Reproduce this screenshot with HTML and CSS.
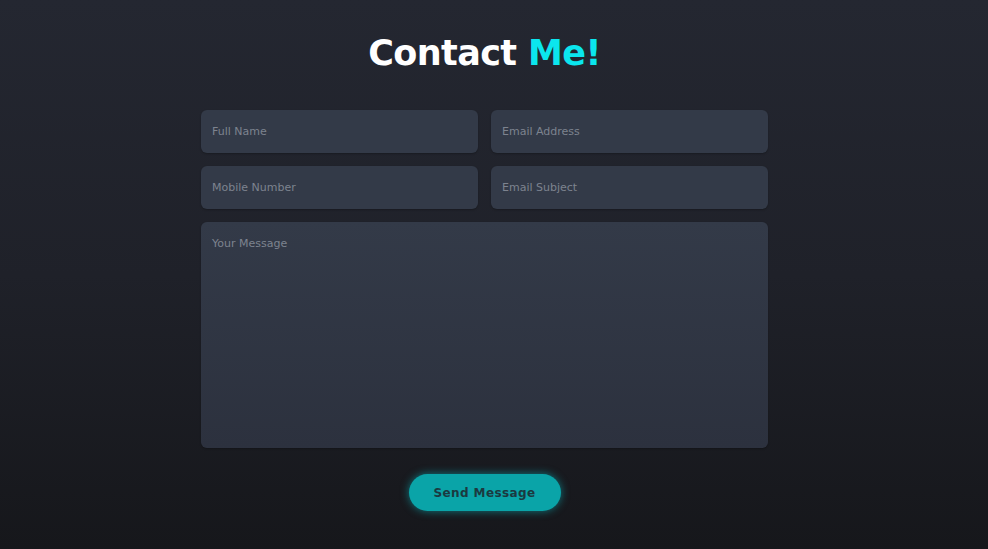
FILE: index.html
```html
<!DOCTYPE html>
<html>
<head>
<meta charset="utf-8">
<link rel="stylesheet" href="styles.css">
</head>
<body>
<section class="contact">
  <h2 class="heading">Contact <span class="accent">Me!</span></h2>
  <form class="form">
    <div class="row">
      <input class="field" type="text" placeholder="Full Name">
      <input class="field" type="email" placeholder="Email Address">
    </div>
    <div class="row">
      <input class="field" type="text" placeholder="Mobile Number">
      <input class="field" type="text" placeholder="Email Subject">
    </div>
    <textarea class="message" placeholder="Your Message"></textarea>
    <div class="actions">
      <button class="btn" type="button">Send Message</button>
    </div>
  </form>
</section>
</body>
</html>
```
FILE: styles.css
```css
html, body {
  margin: 0;
  height: 100%;
}
body {
  width: 988px;
  height: 549px;
  overflow: hidden;
  background: linear-gradient(180deg, #242731 0%, #1f2129 50%, #16171b 100%);
  font-family: "DejaVu Sans", "Open Sans", sans-serif;
}
.contact {
  width: 969px;
  display: flex;
  flex-direction: column;
  align-items: center;
  padding-top: 30px;
}
.heading {
  margin: 0;
  font-family: "DejaVu Sans", sans-serif;
  font-weight: 700;
  font-size: 35px;
  line-height: 46px;
  color: #ffffff;
  letter-spacing: -0.6px;
}
.accent {
  color: #0be6ee;
}
.form {
  width: 567px;
  margin-top: 34px;
  display: flex;
  flex-direction: column;
  gap: 13px;
}
.row {
  display: flex;
  gap: 13px;
}
.field, .message {
  box-sizing: border-box;
  border: none;
  outline: none;
  border-radius: 6px;
  background: #333a48;
  color: #c8ccd4;
  font-family: "DejaVu Sans", sans-serif;
  font-size: 11px;
  padding: 0 11px;
  box-shadow: 0 1px 2px rgba(0,0,0,0.25);
}
.field {
  flex: 1;
  width: 0;
  height: 43px;
}
.message {
  height: 226px;
  resize: none;
  padding-top: 15px;
  background: linear-gradient(180deg, #333a48 0%, #2c313e 100%);
}
.field::placeholder, .message::placeholder {
  color: #7d838f;
}
.actions {
  display: flex;
  justify-content: center;
  margin-top: 13px;
}
.btn {
  width: 152px;
  height: 37px;
  border: none;
  border-radius: 19px;
  background: #0aa4a8;
  color: #1b3940;
  font-family: "DejaVu Sans", sans-serif;
  font-weight: 700;
  font-size: 12px;
  letter-spacing: 0.4px;
  box-shadow: 0 0 8px rgba(10, 200, 210, 0.55);
}
```
